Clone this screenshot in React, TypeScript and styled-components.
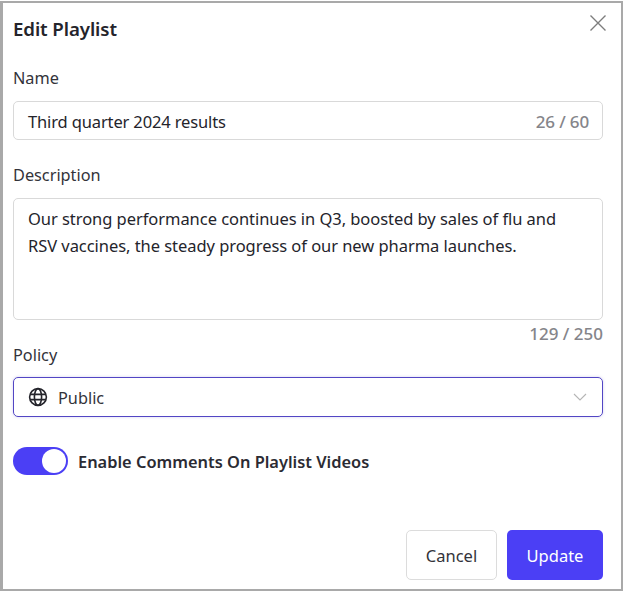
import { createGlobalStyle } from 'styled-components';
import styled from 'styled-components';

const GlobalStyle = createGlobalStyle`
    html, body {
        margin: 0;
        padding: 0;
        background: #ffffff;
    }
    body {
        font-family: 'Noto Sans', 'Open Sans', sans-serif;
        color: #24242b;
    }
`;

const Styles = {
    Dialog: styled.main`
        box-sizing: border-box;
        width: 623px;
        height: 590px;
        margin-top: 1px;
        padding: 0 18px 9px 10px;
        border: 2px solid #a9a9a9;
        border-left-width: 3px;
        background: #ffffff;
        display: flex;
        flex-direction: column;
    `,
    Header: styled.header`
        display: flex;
        align-items: center;
        justify-content: space-between;
        height: 52px;
    `,
    Title: styled.h1`
        margin: 0;
        font-size: 18.7px;
        line-height: 24px;
        font-weight: 600;
        letter-spacing: -0.1px;
        color: #24242b;
    `,
    Close: styled.button`
        border: 0;
        padding: 0;
        margin: -12px -5px 0 0;
        background: none;
        width: 20px;
        height: 20px;
        color: #7d7d7d;
        display: flex;
    `,
    Label: styled.label`
        display: block;
        font-size: 16.3px;
        line-height: 22px;
        color: #33333a;
    `,
    InputBox: styled.div`
        box-sizing: border-box;
        height: 39px;
        margin-top: 12px;
        padding: 1px 13px 0 14px;
        border: 1px solid #d9d9d9;
        border-radius: 5px;
        display: flex;
        align-items: center;
        justify-content: space-between;
        font-size: 16.5px;
        letter-spacing: -0.14px;
    `,
    Count: styled.span`
        font-size: 17px;
        font-weight: 500;
        color: #85858a;
    `,
    Section: styled.div<{ $top: number }>`
        margin-top: ${(p) => p.$top}px;
    `,
    TextBox: styled.div`
        box-sizing: border-box;
        height: 122px;
        margin-top: 12px;
        padding: 6px 14px;
        border: 1px solid #d9d9d9;
        border-radius: 5px;
        font-size: 16.5px;
        line-height: 27px;
        letter-spacing: -0.05px;
    `,
    CountRow: styled.div`
        display: flex;
        justify-content: flex-end;
        height: 24px;
        line-height: 28px;
    `,
    Select: styled.div`
        box-sizing: border-box;
        height: 40px;
        margin-top: 11px;
        padding: 0 14px;
        border: 1px solid #5246c4;
        border-radius: 5px;
        box-shadow: 0 0 3px rgba(82, 70, 196, 0.25);
        display: flex;
        align-items: center;
        gap: 10px;
        font-size: 16.3px;
        color: #33333a;
    `,
    SelectValue: styled.span`
        flex: 1;
        padding-top: 1px;
    `,
    ToggleRow: styled.div`
        display: flex;
        align-items: center;
        gap: 10px;
        margin-top: 30px;
    `,
    Toggle: styled.span`
        position: relative;
        box-sizing: border-box;
        width: 55px;
        height: 28px;
        border-radius: 14px;
        background: #4b3ff5;
        flex: none;
    `,
    Knob: styled.span`
        position: absolute;
        top: 2px;
        right: 2px;
        width: 24px;
        height: 24px;
        border-radius: 50%;
        background: #ffffff;
    `,
    ToggleLabel: styled.span`
        font-size: 16.4px;
        font-weight: 600;
        color: #2b2b33;
    `,
    Footer: styled.footer`
        margin-top: auto;
        display: flex;
        justify-content: flex-end;
        gap: 10px;
    `,
    Cancel: styled.button`
        width: 91px;
        height: 50px;
        border: 1px solid #dcdcdc;
        border-radius: 5px;
        background: #ffffff;
        font: inherit;
        font-size: 16.5px;
        color: #33333a;
    `,
    Update: styled.button`
        width: 96px;
        height: 50px;
        border: 0;
        border-radius: 5px;
        background: #4b3ff5;
        font: inherit;
        font-size: 16.5px;
        color: #ffffff;
    `,
};

export default function App() {
    return (
        <>
            <GlobalStyle />
            <Styles.Dialog>
                <Styles.Header>
                    <Styles.Title>Edit Playlist</Styles.Title>
                    <Styles.Close aria-label="Close">
                        <svg width="20" height="20" viewBox="0 0 20 20" fill="none" stroke="currentColor" strokeWidth="1.4">
                            <path d="M2.5 2.5 17.5 17.5M17.5 2.5 2.5 17.5" />
                        </svg>
                    </Styles.Close>
                </Styles.Header>

                <Styles.Section $top={12}>
                    <Styles.Label>Name</Styles.Label>
                    <Styles.InputBox>
                        <span>Third quarter 2024 results</span>
                        <Styles.Count>26 / 60</Styles.Count>
                    </Styles.InputBox>
                </Styles.Section>

                <Styles.Section $top={24}>
                    <Styles.Label>Description</Styles.Label>
                    <Styles.TextBox>
                        Our strong performance continues in Q3, boosted by sales of flu and RSV vaccines, the steady progress of our new pharma launches.
                    </Styles.TextBox>
                    <Styles.CountRow>
                        <Styles.Count>129 / 250</Styles.Count>
                    </Styles.CountRow>
                </Styles.Section>

                <Styles.Section $top={0}>
                    <Styles.Label>Policy</Styles.Label>
                    <Styles.Select>
                        <svg width="20" height="20" viewBox="0 0 20 20" fill="none" stroke="#24242b" strokeWidth="1.6">
                            <circle cx="10" cy="10" r="8.4" />
                            <ellipse cx="10" cy="10" rx="3.6" ry="8.4" />
                            <path d="M2 7.4h16M2 12.6h16" />
                        </svg>
                        <Styles.SelectValue>Public</Styles.SelectValue>
                        <svg width="14" height="8" viewBox="0 0 14 8" fill="none" stroke="#b5b5b5" strokeWidth="1.1" style={{ marginRight: 1 }}>
                            <path d="M1 1 7 7 13 1" />
                        </svg>
                    </Styles.Select>
                </Styles.Section>

                <Styles.ToggleRow>
                    <Styles.Toggle>
                        <Styles.Knob />
                    </Styles.Toggle>
                    <Styles.ToggleLabel>Enable Comments On Playlist Videos</Styles.ToggleLabel>
                </Styles.ToggleRow>

                <Styles.Footer>
                    <Styles.Cancel>Cancel</Styles.Cancel>
                    <Styles.Update>Update</Styles.Update>
                </Styles.Footer>
            </Styles.Dialog>
        </>
    );
}
